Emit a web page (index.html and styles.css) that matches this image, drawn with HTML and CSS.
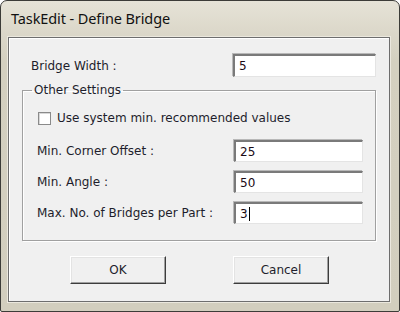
FILE: index.html
```html
<!DOCTYPE html>
<html>
<head>
<meta charset="utf-8">
<link rel="stylesheet" href="styles.css">
</head>
<body>
<div class="window">
  <div class="titlebar">TaskEdit - Define Bridge</div>
  <div class="client">
    <div class="row top-row">
      <span class="label">Bridge Width :</span>
      <div class="field wide">5</div>
    </div>
    <fieldset class="group">
      <legend>Other Settings</legend>
      <label class="check">
        <span class="box"></span>
        <span>Use system min. recommended values</span>
      </label>
      <div class="row grow">
        <span class="label">Min. Corner Offset :</span>
        <div class="field">25</div>
      </div>
      <div class="row grow">
        <span class="label">Min. Angle :</span>
        <div class="field">50</div>
      </div>
      <div class="row grow">
        <span class="label">Max. No. of Bridges per Part :</span>
        <div class="field">3<span class="caret"></span></div>
      </div>
    </fieldset>
    <div class="buttons">
      <button class="btn">OK</button>
      <button class="btn">Cancel</button>
    </div>
  </div>
</div>
</body>
</html>
```
FILE: styles.css
```css
* { box-sizing: border-box; }
html, body { margin: 0; padding: 0; background: #ffffff; }
body {
  width: 400px;
  height: 312px;
  font-family: "DejaVu Sans", Verdana, sans-serif;
  font-size: 12px;
  color: #1e1e2c;
}
.window {
  width: 400px;
  height: 312px;
  border: 1px solid #3c3c38;
  border-radius: 7px 7px 2px 2px;
  background: linear-gradient(#e6e3d7 0px, #dcd8ca 30px, #d4d0c0 60px, #d2cebe 100%);
  display: flex;
  flex-direction: column;
  padding: 0 9px 9px 7px;
}
.titlebar {
  height: 36px;
  flex: none;
  display: flex;
  align-items: center;
  padding-left: 3px;
  padding-bottom: 3px;
  font-family: "Noto Sans", "Open Sans", sans-serif;
  font-size: 14.5px;
  color: #111;
  letter-spacing: -0.1px;
}
.client {
  flex: 1;
  background: #f0f0f0;
  border: 1px solid #6e6e6e;
  box-shadow: inset 1px 1px 0 #ffffff, 0 0 0 1px #ebe8de;
  display: flex;
  flex-direction: column;
  padding: 16px 13px 0 13px;
}
.row {
  display: flex;
  align-items: center;
  justify-content: space-between;
  flex: none;
}
.top-row {
  padding-left: 9px;
  height: 23px;
}
.field {
  height: 23px;
  background: #ffffff;
  border-top: 2px solid #7a7a7a;
  border-left: 2px solid #7a7a7a;
  border-right: 1px solid #e4e4e4;
  border-bottom: 1px solid #e4e4e4;
  box-shadow: -1px -1px 0 #b8b8b8;
  padding-left: 4px;
  display: flex;
  align-items: center;
  color: #1a0a14;
  font-size: 12px;
  width: 129px;
}
.field.wide { width: 143px; height: 23px; }
.caret {
  display: inline-block;
  width: 1px;
  height: 14px;
  background: #000;
  margin-left: 1px;
}
.group {
  flex: none;
  margin: 6px 0 0 0;
  border: 1px solid #a0a0a0;
  box-shadow: 1px 1px 0 #ffffff, inset 1px 1px 0 #ffffff;
  padding: 10px 12px 6px 14px;
  height: 158px;
  display: flex;
  flex-direction: column;
}
.group legend {
  padding: 0 2px;
  margin-left: -5px;
  font-size: 12px;
}
.check {
  display: flex;
  align-items: center;
  gap: 6px;
  height: 18px;
  margin-top: 2px;
  margin-bottom: 13px;
}
.box {
  width: 13px;
  height: 13px;
  background: #ffffff;
  border: 1px solid #8a8a8a;
  box-shadow: inset 1px 1px 0 #d8d8d8;
  margin-left: 1px;
}
.row.grow {
  height: 22px;
  margin-bottom: 9px;
}
.row.grow:last-child { margin-bottom: 0; }
.row.grow .field { height: 22px; }
.buttons {
  flex: none;
  display: flex;
  justify-content: space-between;
  padding: 0 47px 0 48px;
  margin-top: 15px;
}
.btn {
  width: 96px;
  height: 28px;
  background: #f0f0f0;
  border: 1px solid;
  border-color: #ffffff #3c3c3c #3c3c3c #ffffff;
  box-shadow: inset -1px -1px 0 #a0a0a0, inset 1px 1px 0 #e3e3e3;
  font-family: "DejaVu Sans", sans-serif;
  font-size: 12px;
  color: #1e1e2c;
  padding: 0;
}
```
